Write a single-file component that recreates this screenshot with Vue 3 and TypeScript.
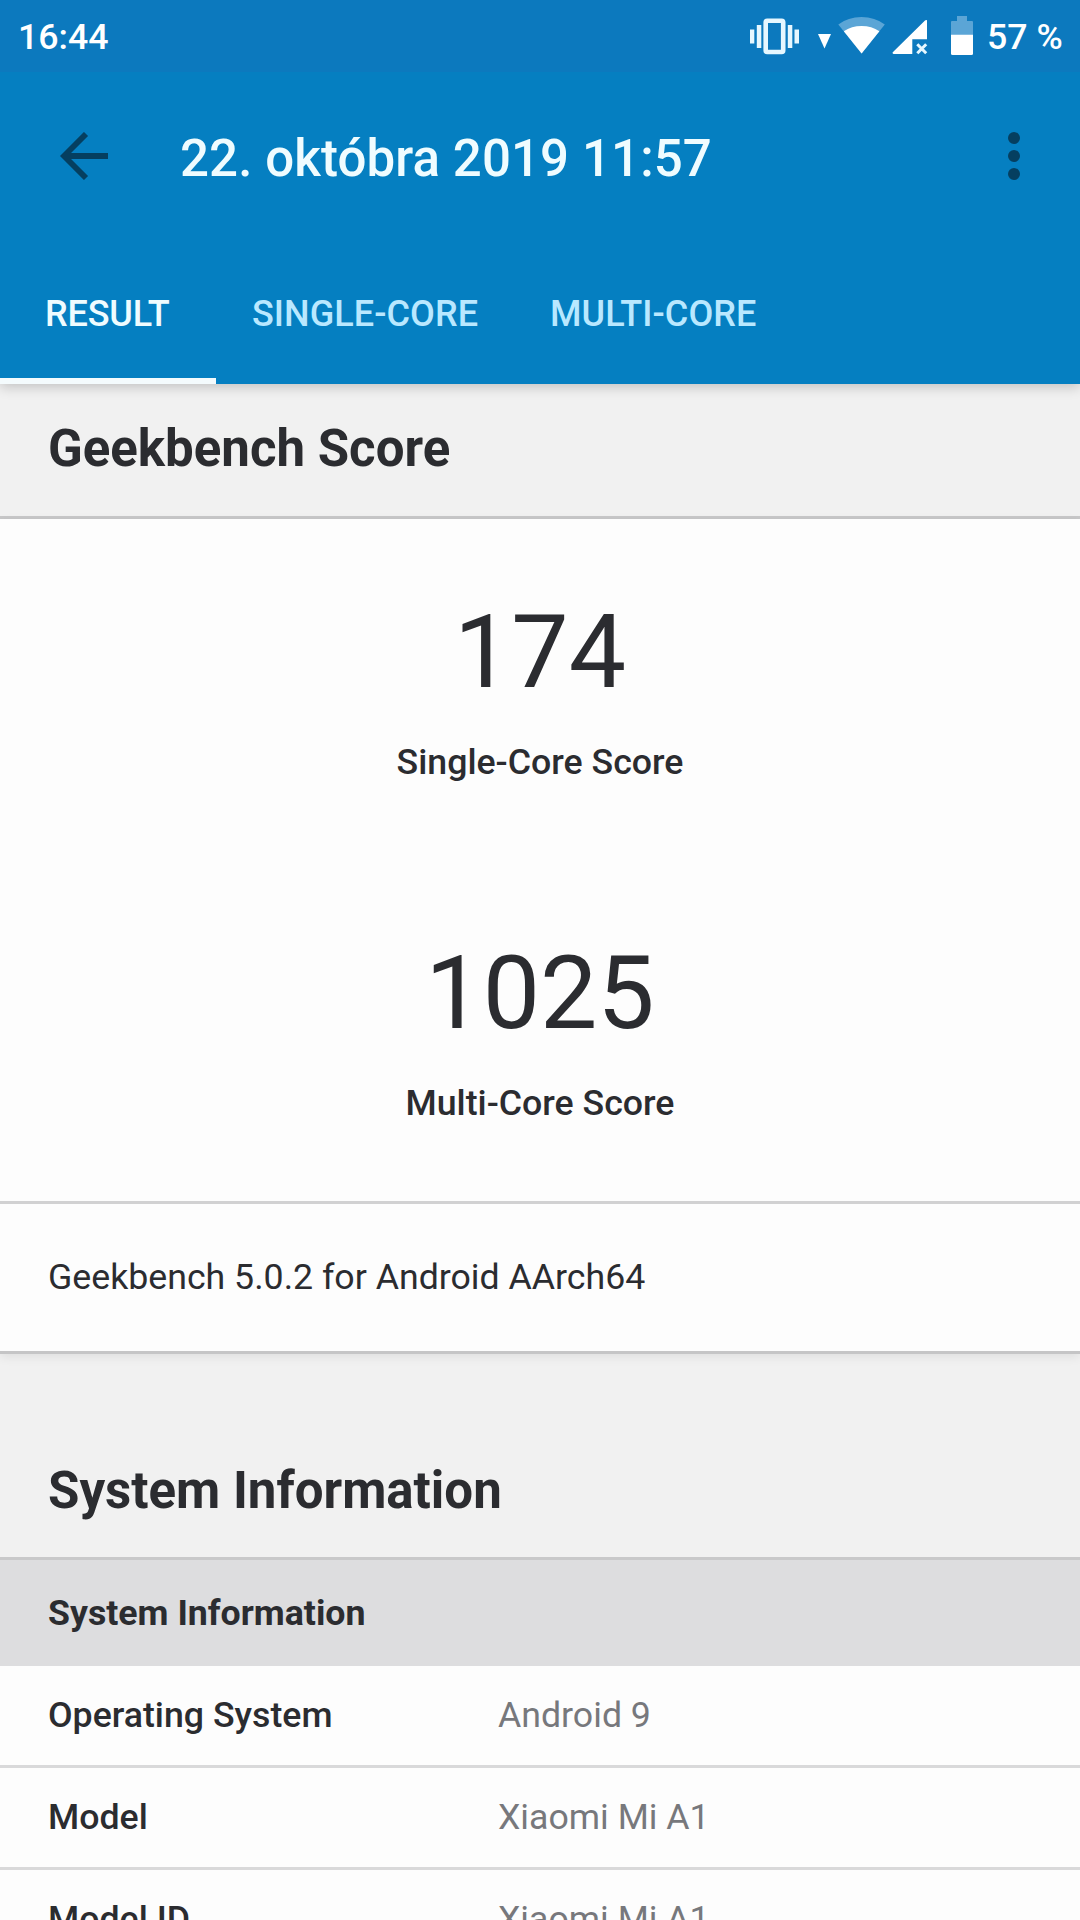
<script setup lang="ts">
interface InfoRow {
  label: string
  value: string
}

const tabs: string[] = ['RESULT', 'SINGLE-CORE', 'MULTI-CORE']
const activeTab = 'RESULT'

const rows: InfoRow[] = [
  { label: 'Operating System', value: 'Android 9' },
  { label: 'Model', value: 'Xiaomi Mi A1' },
  { label: 'Model ID', value: 'Xiaomi Mi A1' },
]
</script>

<template>
  <div class="screen">
    <header class="top">
      <div class="status">
        <span class="clock">16:44</span>
        <div class="status-right">
          <svg class="vibrate" width="50" height="72" viewBox="750 0 50 72" fill="#e6f7ff">
            <rect x="750" y="29.5" width="4.3" height="14" />
            <rect x="756.8" y="25" width="4.5" height="23" />
            <rect x="787.8" y="25" width="4.5" height="23" />
            <rect x="794.5" y="29.5" width="4.5" height="14" />
            <rect x="765.7" y="20.7" width="17.5" height="31.3" rx="1.5" fill="none" stroke="#e6f7ff" stroke-width="4.6" />
          </svg>
          <svg class="caret" width="13" height="72" viewBox="818 0 13 72" fill="#fff">
            <path d="M818 34H831L824.5 48.5Z" />
          </svg>
          <svg class="wifi" width="47" height="72" viewBox="838 0 47 72">
            <path d="M838.3 24.5Q848 17 861.5 17T884.8 24.5L861.6 53.5Z" fill="#5ba5d6" />
            <path d="M843.8 31.2Q851.5 26 861.6 26T879.4 31.2L861.6 53.5Z" fill="#fff" />
          </svg>
          <svg class="signal" width="36" height="72" viewBox="892 0 36 72">
            <path d="M927 20.3V39.3H912.3V54H893.6Q891.8 53.3 893 52L925 20.6Q926 19.6 927 20.3Z" fill="#fff" />
            <path d="M917.3 44.2L926.2 53.2M926.2 44.2L917.3 53.2" stroke="#e6f7ff" stroke-width="3" />
          </svg>
          <svg class="battery" width="22" height="72" viewBox="951 0 22 72">
            <path d="M957 16H967V21H972Q973 21 973 22V35H951V22Q951 21 952 21H957Z" fill="#5ba5d6" />
            <path d="M951 34.7H973V53.5Q973 55 971.5 55H952.5Q951 55 951 53.5Z" fill="#fff" />
          </svg>
          <span class="percent">57 %</span>
        </div>
      </div>
      <div class="appbar">
        <svg class="back" width="48" height="48" viewBox="0 0 48 48" fill="none" stroke="#053f60" stroke-width="5.8">
          <path d="M48 24H4M26 2L4 24L26 46" />
        </svg>
        <h1 class="title">22. októbra 2019 11:57</h1>
        <svg class="more" width="12" height="48" viewBox="0 0 12 48" fill="#053f60">
          <circle cx="6" cy="6" r="6" />
          <circle cx="6" cy="24" r="6" />
          <circle cx="6" cy="42" r="6" />
        </svg>
      </div>
      <nav class="tabs">
        <div v-for="tab in tabs" :key="tab" class="tab" :class="{ active: tab === activeTab }">
          <span>{{ tab }}</span>
        </div>
      </nav>
    </header>

    <h2 class="heading first"><span>Geekbench Score</span></h2>
    <section class="card">
      <div class="scores">
        <div class="score">174</div>
        <div class="score-label"><span>Single-Core Score</span></div>
        <div class="score second">1025</div>
        <div class="score-label"><span>Multi-Core Score</span></div>
      </div>
      <div class="version"><span>Geekbench 5.0.2 for Android AArch64</span></div>
    </section>

    <h2 class="heading second-heading"><span>System Information</span></h2>
    <section class="table">
      <div class="band"><span>System Information</span></div>
      <div v-for="row in rows" :key="row.label" class="row">
        <span class="label">{{ row.label }}</span>
        <span class="value">{{ row.value }}</span>
      </div>
    </section>
  </div>
</template>

<style>
body {
  margin: 0;
  overflow: hidden;
}
</style>

<style scoped>
.screen {
  width: 1080px;
  height: 1920px;
  overflow: hidden;
  box-sizing: border-box;
  background: #f1f1f1;
  color: #2b2c30;
  font-family: Roboto, sans-serif;
  font-size: 35.7px;
  display: flex;
  flex-direction: column;
}
.screen > * {
  flex-shrink: 0;
}
.top {
  position: relative;
  z-index: 1;
  height: 384px;
  background: #057fc1;
  box-shadow: 0 3px 12px rgba(0, 0, 0, 0.2);
  display: flex;
  flex-direction: column;
}
.status {
  height: 72px;
  box-sizing: border-box;
  padding: 0 19px 0 18px;
  background: #0c79be;
  color: #fff;
  display: flex;
  justify-content: space-between;
  line-height: 75px;
  font-weight: 500;
  white-space: nowrap;
}
.status-right {
  display: flex;
}
.status-right svg {
  flex: none;
}
.caret {
  margin-left: 18px;
}
.wifi {
  margin-left: 7px;
}
.signal {
  margin-left: 7px;
}
.battery {
  margin-left: 23px;
}
.percent {
  margin-left: 14px;
  width: 74px;
}
.appbar {
  height: 168px;
  padding: 0 60px;
  display: flex;
  align-items: center;
}
.title {
  margin: 5px 0 0 72px;
  flex: 1;
  font-size: 51px;
  font-weight: 500;
  line-height: 60px;
  letter-spacing: 0.1px;
  color: #effcff;
  white-space: nowrap;
}
.tabs {
  height: 144px;
  display: flex;
}
.tab {
  box-sizing: border-box;
  height: 144px;
  padding: 48px 36px 0;
  font-size: 36px;
  line-height: 52px;
  letter-spacing: 0.06px;
  font-weight: 500;
  color: #b9e8ff;
  white-space: nowrap;
}
.tab.active {
  width: 216px;
  padding-left: 45px;
  letter-spacing: -0.15px;
  color: #effcff;
  border-bottom: 6px solid #f4fbfd;
}
.heading {
  margin: 0;
  box-sizing: border-box;
  padding-left: 48px;
  font-size: 51px;
  font-weight: 700;
}
.first {
  height: 135px;
  line-height: 129px;
  border-bottom: 3px solid #c8c8c9;
}
.card {
  background: #fdfdfd;
  box-shadow: 0 3px 10px rgba(0, 0, 0, 0.08);
}
.scores {
  height: 685px;
  box-sizing: border-box;
  padding-top: 83px;
  border-bottom: 3px solid #d1d1d2;
  text-align: center;
}
.score {
  font-size: 102px;
  line-height: 100px;
}
.second {
  margin-top: 156px;
}
.score-label {
  margin-top: 35px;
  line-height: 50px;
  font-weight: 500;
}
.version {
  height: 150px;
  box-sizing: border-box;
  padding-left: 48px;
  line-height: 146px;
  border-bottom: 3px solid #c5c5c6;
}
.second-heading {
  height: 206px;
  padding-top: 107px;
  line-height: 60px;
  border-bottom: 3px solid #c9c9ca;
}
.band {
  height: 106px;
  padding-left: 48px;
  line-height: 107px;
  font-weight: 700;
  background: #dddddf;
}
.row {
  height: 102px;
  box-sizing: border-box;
  padding-left: 48px;
  display: flex;
  line-height: 98px;
  background: #fdfdfd;
  border-bottom: 3px solid #d9d9da;
}
.label {
  width: 450px;
  font-weight: 500;
}
.value {
  color: #77787c;
}
</style>
